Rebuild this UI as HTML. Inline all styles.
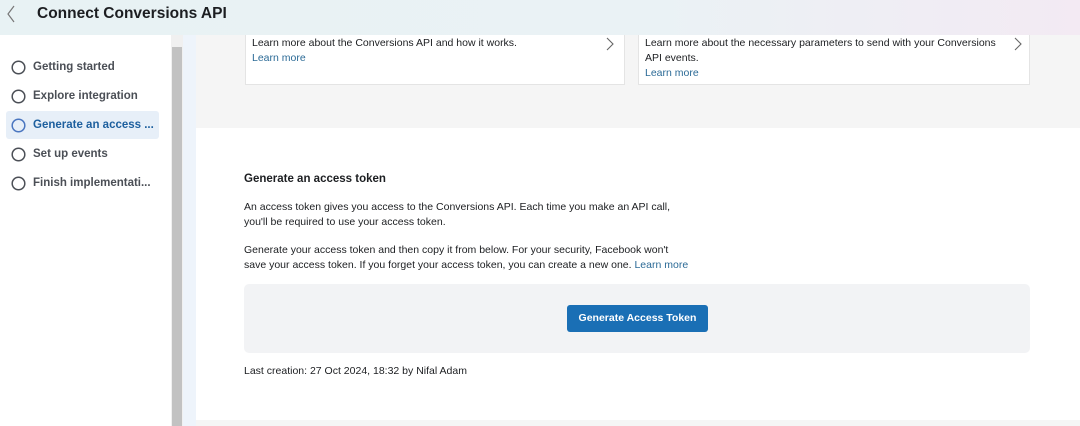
<!DOCTYPE html>
<html><head><style>
*{margin:0;padding:0;box-sizing:border-box}
body{width:1080px;height:426px;overflow:hidden;font-family:"Liberation Sans",sans-serif;background:#f5f5f5;position:relative;color:#1c1e21}
.hdr{position:absolute;left:0;top:0;width:1080px;height:35px;background:linear-gradient(90deg,#e8f2f4,#eaf2f5 60%,#f3eaf3)}
.hdr .t{position:absolute;left:37px;top:5px;font-size:15.5px;font-weight:bold;color:#1c1e21}
.side{position:absolute;left:0;top:35px;width:171px;height:391px;background:#fff}
.sb{position:absolute;left:171px;top:35px;width:12px;height:391px;background:#f0f0f0}
.sb i{position:absolute;left:1px;top:12px;width:10px;height:379px;background:#c2c2c2}
.strip{position:absolute;left:183px;top:35px;width:13px;height:391px;background:#eef4fb}
.it{position:absolute;left:6px;width:153px;height:28px;font-size:11.5px;font-weight:bold;color:#4b4f56;padding-left:27px;line-height:28px;white-space:nowrap}
.it svg{position:absolute;left:5px;top:7px}
.it.a{background:#e7eff8;color:#1d5f9e;border-radius:3px}
.card{position:absolute;top:35px;height:50px;background:#fff;border:1px solid #e4e4e4;border-top:none;font-size:10.5px;line-height:15px;padding:1px 0 0 6px;color:#1c1e21}
.card a{color:#2b6a96;text-decoration:none}
.card svg{position:absolute;top:1px}
.panel{position:absolute;left:196px;top:128px;width:884px;height:292px;background:#fff}
.p{position:absolute;left:244px;font-size:10.5px;line-height:15px;color:#1c1e21}
.box{position:absolute;left:244px;top:284px;width:786px;height:69px;background:#f2f3f5;border-radius:5px}
.btn{position:absolute;left:567px;top:305px;width:141px;height:27px;background:#1a6fb5;border-radius:3px;color:#fff;font-size:10.5px;font-weight:bold;text-align:center;line-height:27px}
</style></head><body>
<div class="hdr"><svg style="position:absolute;left:5px;top:4px" width="12" height="20"><path d="M9 2 L3 10 L9 18" stroke="#777" stroke-width="1.2" fill="none"/></svg><div class="t">Connect Conversions API</div></div>
<div class="side">
<div class="it" style="top:18px"><svg width="15" height="15"><circle cx="7.5" cy="7.5" r="6.3" fill="none" stroke="#4b4f56" stroke-width="1.5"/></svg>Getting started</div>
<div class="it" style="top:47px"><svg width="15" height="15"><circle cx="7.5" cy="7.5" r="6.3" fill="none" stroke="#4b4f56" stroke-width="1.5"/></svg>Explore integration</div>
<div class="it a" style="top:76px"><svg width="15" height="15"><circle cx="7.5" cy="7.5" r="6.3" fill="none" stroke="#4a76c0" stroke-width="1.5"/></svg>Generate an access ...</div>
<div class="it" style="top:105px"><svg width="15" height="15"><circle cx="7.5" cy="7.5" r="6.3" fill="none" stroke="#4b4f56" stroke-width="1.5"/></svg>Set up events</div>
<div class="it" style="top:134px"><svg width="15" height="15"><circle cx="7.5" cy="7.5" r="6.3" fill="none" stroke="#4b4f56" stroke-width="1.5"/></svg>Finish implementati...</div>
</div>
<div class="sb"><i></i></div>
<div class="strip"></div>
<div class="card" style="left:245px;width:380px">Learn more about the Conversions API and how it works.<br><a>Learn more</a><svg style="left:359px" width="10" height="16"><path d="M2 2 L8 8 L2 14" stroke="#666" stroke-width="1.1" fill="none"/></svg></div>
<div class="card" style="left:638px;width:392px">Learn more about the necessary parameters to send with your Conversions<br>API events.<br><a>Learn more</a><svg style="left:374px" width="10" height="16"><path d="M2 2 L8 8 L2 14" stroke="#666" stroke-width="1.1" fill="none"/></svg></div>
<div class="panel"></div>
<div class="p" style="top:172px;font-size:11.5px;font-weight:bold">Generate an access token</div>
<div class="p" style="top:200px">An access token gives you access to the Conversions API. Each time you make an API call,<br>you'll be required to use your access token.</div>
<div class="p" style="top:243px">Generate your access token and then copy it from below. For your security, Facebook won't<br>save your access token. If you forget your access token, you can create a new one. <span style="color:#2b6a96">Learn more</span></div>
<div class="box"></div>
<div class="btn">Generate Access Token</div>
<div class="p" style="top:364px">Last creation: 27 Oct 2024, 18:32 by Nifal Adam</div>
</body></html>
